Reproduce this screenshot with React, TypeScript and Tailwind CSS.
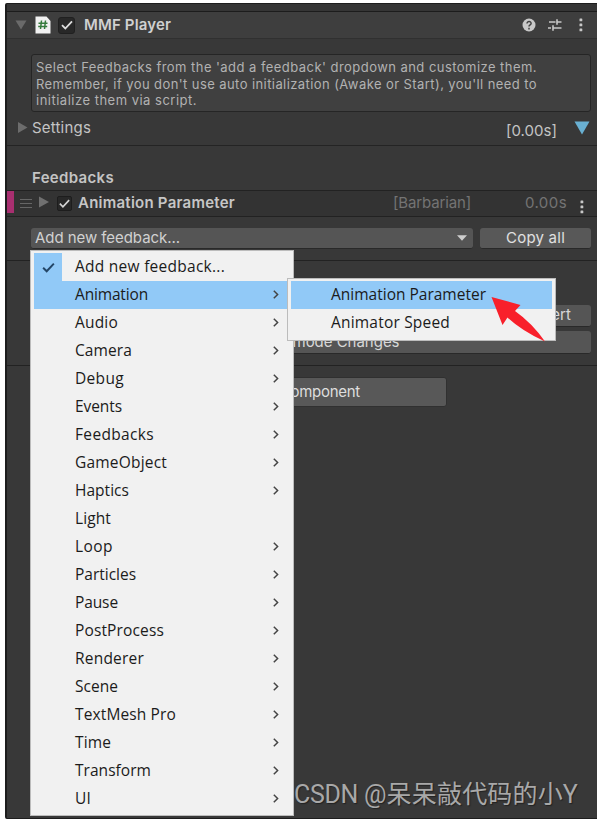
import React from "react";

type Item = { label: string; width: number; arrow?: boolean };

const items: Item[] = [
  { label: "Add new feedback...", width: 150, arrow: false },
  { label: "Animation", width: 73 },
  { label: "Audio", width: 43 },
  { label: "Camera", width: 57 },
  { label: "Debug", width: 49 },
  { label: "Events", width: 47 },
  { label: "Feedbacks", width: 79 },
  { label: "GameObject", width: 92 },
  { label: "Haptics", width: 54 },
  { label: "Light", width: 36, arrow: false },
  { label: "Loop", width: 38 },
  { label: "Particles", width: 61 },
  { label: "Pause", width: 43 },
  { label: "PostProcess", width: 89 },
  { label: "Renderer", width: 69 },
  { label: "Scene", width: 43 },
  { label: "TextMesh Pro", width: 101 },
  { label: "Time", width: 36 },
  { label: "Transform", width: 76 },
  { label: "UI", width: 16 },
];

/* A single-line label whose glyphs are fitted to a fixed advance width. */
function Fit({ children, w, className = "" }: { children: string; w: number; className?: string }) {
  const ref = React.useRef<HTMLSpanElement>(null);
  React.useLayoutEffect(() => {
    const el = ref.current;
    if (!el) return;
    el.style.letterSpacing = "0px";
    const natural = el.getBoundingClientRect().width;
    el.style.letterSpacing = `${(w - natural) / children.length}px`;
  }, [children, w]);
  return (
    <span ref={ref} className={`inline-block shrink-0 whitespace-pre ${className}`}>
      {children}
    </span>
  );
}

function Check({ className = "" }: { className?: string }) {
  return (
    <svg viewBox="0 0 14 14" className={className} fill="none" stroke="currentColor" strokeWidth="1.8">
      <path d="M2 7.2 5.3 10.5 12 3.3" />
    </svg>
  );
}

function Dots() {
  return (
    <svg width="4" height="14" viewBox="0 0 4 14" fill="#c8c8c8" className="shrink-0">
      <rect x="0.5" y="0.5" width="2.8" height="2.8" rx="0.6" />
      <rect x="0.5" y="5.5" width="2.8" height="2.8" rx="0.6" />
      <rect x="0.5" y="10.5" width="2.8" height="2.8" rx="0.6" />
    </svg>
  );
}

function Header() {
  return (
    <div className="flex h-[28px] items-center border-y border-t-[#1c1c1c] border-b-[#303030] bg-[#3e3e3e] pl-2">
      <svg width="12" height="10" viewBox="0 0 12 10" className="shrink-0">
        <path d="M.5.5h11L6 9.5z" fill="#6a6a6a" />
      </svg>
      <svg width="16" height="18" viewBox="0 0 16 18" className="ml-2 shrink-0">
        <path d="M1 .5h10.5L15.5 5v12.5H.5V.5z" fill="#f1f1f1" />
        <path d="M6.5 4.5 5.5 13M10.5 4.5 9.5 13M3.5 7.2h9M3.2 10.4h9" stroke="#357b3c" strokeWidth="1.5" />
      </svg>
      <div className="ml-[7px] flex size-[17px] shrink-0 items-center justify-center rounded-[3px] border border-[#202020] bg-[#282828]">
        <Check className="size-[14px] text-[#dedede]" />
      </div>
      <Fit w={87} className="mt-px ml-[9px] text-[15px] font-semibold text-[#d0d0d0]">MMF Player</Fit>
      <div className="mr-[14px] ml-auto flex items-center">
        <svg width="14" height="14" viewBox="0 0 14 14" className="mr-3">
          <circle cx="7" cy="7" r="6.5" fill="#c8c8c8" />
          <path d="M5 5.5c0-2.8 4.2-2.5 4.1-.1C9.1 7 7 6.8 7 8.6M7 9.8v1.7" fill="none" stroke="#404040" strokeWidth="1.5" />
        </svg>
        <svg width="14" height="12" viewBox="0 0 14 12" className="mr-[17px]" stroke="#c8c8c8" strokeWidth="1.6" fill="none">
          <path d="M1 3h6.5M9 3h4.5M9 .2v5.6M0 9h3M5 9h8.5M5 6.2v5.6" />
        </svg>
        <Dots />
      </div>
    </div>
  );
}

function FeedbackRow() {
  return (
    <div className="flex h-[27px] items-center border-y border-[#222] bg-[#333]">
      <div className="mb-[3px] h-[22px] w-[7px] shrink-0 bg-[#a82f70]" />
      <div className="ml-[6px] flex w-3 shrink-0 flex-col gap-[3px]">
        <div className="h-px bg-[#666]" />
        <div className="h-px bg-[#666]" />
        <div className="h-px bg-[#666]" />
      </div>
      <svg width="10" height="12" viewBox="0 0 10 12" className="mb-[4px] ml-[7px] shrink-0">
        <path d="M0 .5v11L10 6z" fill="#707070" />
      </svg>
      <div className="mb-px ml-2 flex size-[15px] shrink-0 items-center justify-center rounded-[2px] border border-[#1d1d1d] bg-[#282828]">
        <Check className="size-[13px] text-[#d4d4d4]" />
      </div>
      <Fit w={157} className="mb-px ml-[6px] text-[15px] font-semibold text-[#c6c6c6]">Animation Parameter</Fit>
      <Fit w={78} className="mb-px ml-auto text-[15px] text-[#747474]">[Barbarian]</Fit>
      <Fit w={42} className="mb-px ml-[54px] text-[15px] text-[#747474]">0.00s</Fit>
      <div className="mt-[6px] mr-[13px] ml-[13px]"><Dots /></div>
    </div>
  );
}

function Menu() {
  return (
    <div className="absolute top-[250px] left-[30px] h-[566px] w-[264px] border border-[#bcbcbc] bg-[#f1f1f1] py-[2px] pr-[2px] pl-[3px] font-['Open_Sans','Noto_Sans',sans-serif] text-[15.5px] text-[#1b1b1b]">
      {items.map((item, i) => (
        <div key={item.label} className={`flex h-7 items-center ${i === 1 ? "bg-[#91c9f7]" : ""}`}>
          <div className={`flex h-7 w-7 shrink-0 items-center justify-center ${i === 0 ? "bg-[#91c9f7]" : ""}`}>
            {i === 0 && <Check className="size-[15px] text-[#234566]" />}
          </div>
          <Fit w={item.width} className="ml-[13px]">{item.label}</Fit>
          {item.arrow !== false && (
            <svg width="6" height="9" viewBox="0 0 6 9" className="mr-[12px] mb-px ml-auto shrink-0" fill="none" stroke="#444" strokeWidth="1.5">
              <path d="m.8.8 3.8 3.7L.8 8.2" />
            </svg>
          )}
        </div>
      ))}
    </div>
  );
}

function Submenu() {
  return (
    <div className="absolute top-[278px] left-[287px] h-[63px] w-[269px] border border-[#bcbcbc] bg-[#f1f1f1] px-[3px] py-[2px] font-['Open_Sans','Noto_Sans',sans-serif] text-[15.5px] text-[#1b1b1b]">
      <div className="flex h-7 items-center bg-[#91c9f7] pl-10">
        <Fit w={155}>Animation Parameter</Fit>
      </div>
      <div className="flex h-7 items-center pl-10">
        <Fit w={119}>Animator Speed</Fit>
      </div>
    </div>
  );
}

export default function App() {
  return (
    <div className="relative h-[824px] w-[605px] overflow-hidden bg-white pt-[3px] pl-[5px] font-['Inter',sans-serif] text-[15px] text-[#c4c4c4]">
      <div className="h-[816px] w-[592px] overflow-hidden rounded-l-[2px] border-t border-b border-l-2 border-[#1d1d1d] bg-[#383838]">
        <div className="h-[7px] bg-[#353535]" />
        <Header />
        <div className="mt-[15px] ml-6 h-[58px] w-[560px] rounded-[3px] border border-[#252525] bg-[#404040] pt-[4px] pl-1 text-[13px] leading-[16.5px] text-[#b2b2b2]">
          <div className="h-[16.5px]"><Fit w={501}>Select Feedbacks from the 'add a feedback' dropdown and customize them.</Fit></div>
          <div className="h-[16.5px]"><Fit w={501}>Remember, if you don't use auto initialization (Awake or Start), you'll need to</Fit></div>
          <div className="h-[16.5px]"><Fit w={161}>initialize them via script.</Fit></div>
        </div>
        <div className="flex h-[34px] items-center border-b border-[#242424] pb-px pl-[11px]">
          <svg width="10" height="11" viewBox="0 0 10 11" className="mb-[2px] shrink-0">
            <path d="M0 0v11l9.5-5.5z" fill="#6c6c6c" />
          </svg>
          <Fit w={59} className="ml-1">Settings</Fit>
          <Fit w={51} className="mt-[7px] ml-auto">[0.00s]</Fit>
          <svg width="16" height="14" viewBox="0 0 16 14" className="mr-[7px] ml-[17px] shrink-0">
            <path d="M.5.5h15L8 13.5z" fill="#69b0d2" />
          </svg>
        </div>
        <div className="flex h-[44px] items-end pb-px pl-[25px]">
          <Fit w={82} className="font-semibold">Feedbacks</Fit>
        </div>
        <FeedbackRow />
        <div className="flex h-[44px] gap-[7px] border-b border-[#222] pt-[11px] pl-6">
          <div className="flex h-[21px] w-[442px] items-center rounded-[3px] border-b border-[#292929] bg-[#555] pr-[6px] pl-1 text-[#d1d1d1]">
            <Fit w={145}>Add new feedback...</Fit>
            <svg width="10" height="6" viewBox="0 0 10 6" className="ml-auto">
              <path d="M0 .3h10L5 5.8z" fill="#cecece" />
            </svg>
          </div>
          <div className="flex h-[21px] w-[111px] items-center justify-center rounded-[3px] border-b border-[#292929] bg-[#585858] text-[#e0e0e0]">
            <Fit w={59}>Copy all</Fit>
          </div>
        </div>
        <div className="flex h-[105px] flex-col gap-1 border-b border-[#222] pt-[44px] pl-6 text-[#d8d8d8]">
          <div className="flex h-[22px] w-[560px] items-center justify-end rounded-[3px] border-b border-[#292929] bg-[#555] pr-[20px]">
            <Fit w={46}>Revert</Fit>
          </div>
          <div className="flex h-[23px] w-[560px] items-center justify-center rounded-[3px] border-b border-[#292929] bg-[#555] pt-px">
            <Fit w={177}>Keep Playmode Changes</Fit>
          </div>
        </div>
        <div className="mt-[11px] ml-[150px] flex h-[30px] w-[290px] items-center justify-center rounded-[3px] border border-[#303030] bg-[#585858] pl-1 text-[#dedede]">
          <Fit w={112}>Add Component</Fit>
        </div>
      </div>
      <Menu />
      <Submenu />
      <svg className="absolute top-[294px] left-[490px]" width="58" height="50" viewBox="0 0 58 50">
        <path d="M1.5 3 30.5 11l-5.5 6Q42 29 55 47.5 32 37 17.5 23.5L12.5 31z" fill="#f8202b" />
      </svg>
      <div className="absolute top-[777px] left-[294px] flex h-[36px] items-center font-['Roboto','Noto_Sans_CJK_SC',sans-serif] text-[25px] text-[#a8a8a8] [text-shadow:1px_1px_1px_#222]">
        <Fit w={70}>CSDN </Fit>
        <Fit w={214}>@呆呆敲代码的小Y</Fit>
      </div>
    </div>
  );
}
